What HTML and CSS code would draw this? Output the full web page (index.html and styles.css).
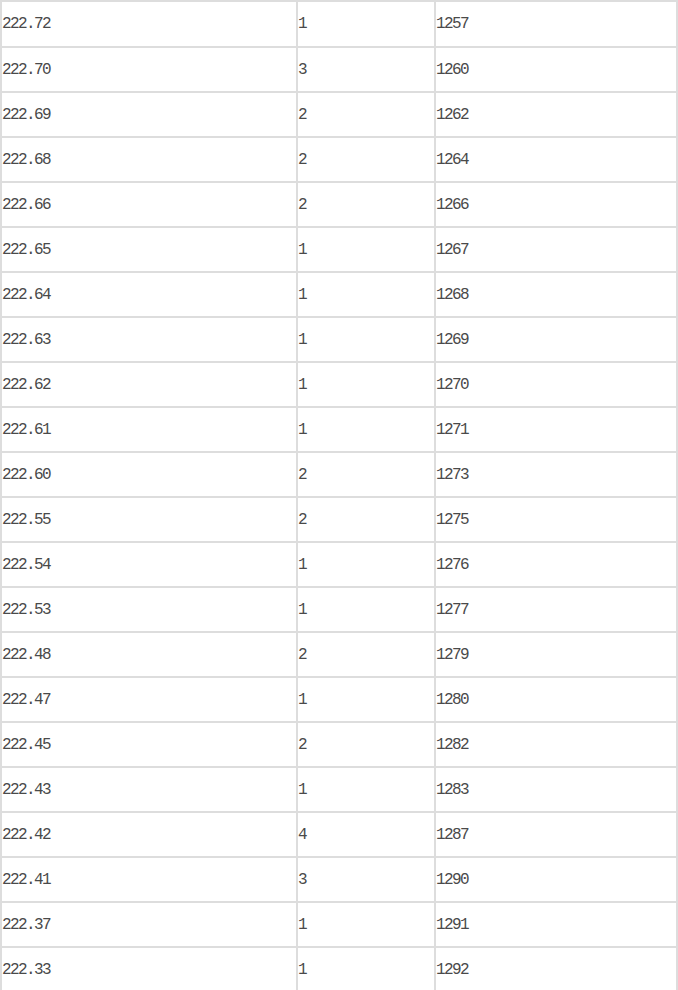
FILE: index.html
```html
<!DOCTYPE html>
<html>
<head>
<meta charset="utf-8">
<link rel="stylesheet" href="styles.css">
</head>
<body>
<table class="grid">
<tbody>
<tr><td class="c1">222.72</td><td class="c2">1</td><td class="c3">1257</td></tr>
<tr><td class="c1">222.70</td><td class="c2">3</td><td class="c3">1260</td></tr>
<tr><td class="c1">222.69</td><td class="c2">2</td><td class="c3">1262</td></tr>
<tr><td class="c1">222.68</td><td class="c2">2</td><td class="c3">1264</td></tr>
<tr><td class="c1">222.66</td><td class="c2">2</td><td class="c3">1266</td></tr>
<tr><td class="c1">222.65</td><td class="c2">1</td><td class="c3">1267</td></tr>
<tr><td class="c1">222.64</td><td class="c2">1</td><td class="c3">1268</td></tr>
<tr><td class="c1">222.63</td><td class="c2">1</td><td class="c3">1269</td></tr>
<tr><td class="c1">222.62</td><td class="c2">1</td><td class="c3">1270</td></tr>
<tr><td class="c1">222.61</td><td class="c2">1</td><td class="c3">1271</td></tr>
<tr><td class="c1">222.60</td><td class="c2">2</td><td class="c3">1273</td></tr>
<tr><td class="c1">222.55</td><td class="c2">2</td><td class="c3">1275</td></tr>
<tr><td class="c1">222.54</td><td class="c2">1</td><td class="c3">1276</td></tr>
<tr><td class="c1">222.53</td><td class="c2">1</td><td class="c3">1277</td></tr>
<tr><td class="c1">222.48</td><td class="c2">2</td><td class="c3">1279</td></tr>
<tr><td class="c1">222.47</td><td class="c2">1</td><td class="c3">1280</td></tr>
<tr><td class="c1">222.45</td><td class="c2">2</td><td class="c3">1282</td></tr>
<tr><td class="c1">222.43</td><td class="c2">1</td><td class="c3">1283</td></tr>
<tr><td class="c1">222.42</td><td class="c2">4</td><td class="c3">1287</td></tr>
<tr><td class="c1">222.41</td><td class="c2">3</td><td class="c3">1290</td></tr>
<tr><td class="c1">222.37</td><td class="c2">1</td><td class="c3">1291</td></tr>
<tr><td class="c1">222.33</td><td class="c2">1</td><td class="c3">1292</td></tr>
</tbody>
</table>
</body>
</html>
```
FILE: styles.css
```css
html, body {
  margin: 0;
  padding: 0;
  background: #ffffff;
}
.grid {
  border-collapse: separate;
  border-spacing: 0;
  border: 1px solid #dddddd;
  table-layout: fixed;
  width: 678px;
  font-family: "Liberation Mono", "Noto Sans CJK SC", monospace;
  font-size: 16px;
  letter-spacing: -1.6px;
  color: #4a4a4a;
}
.grid td {
  border: 1px solid #dddddd;
  padding: 2px 0 0 0;
  height: 41px;
  line-height: 41px;
  vertical-align: top;
  text-align: left;
  white-space: nowrap;
}
.grid tr:first-child td {
  padding-bottom: 1px;
}
.c1 { width: 294px; }
.c2 { width: 136px; }
.c3 { width: 240px; }
```
